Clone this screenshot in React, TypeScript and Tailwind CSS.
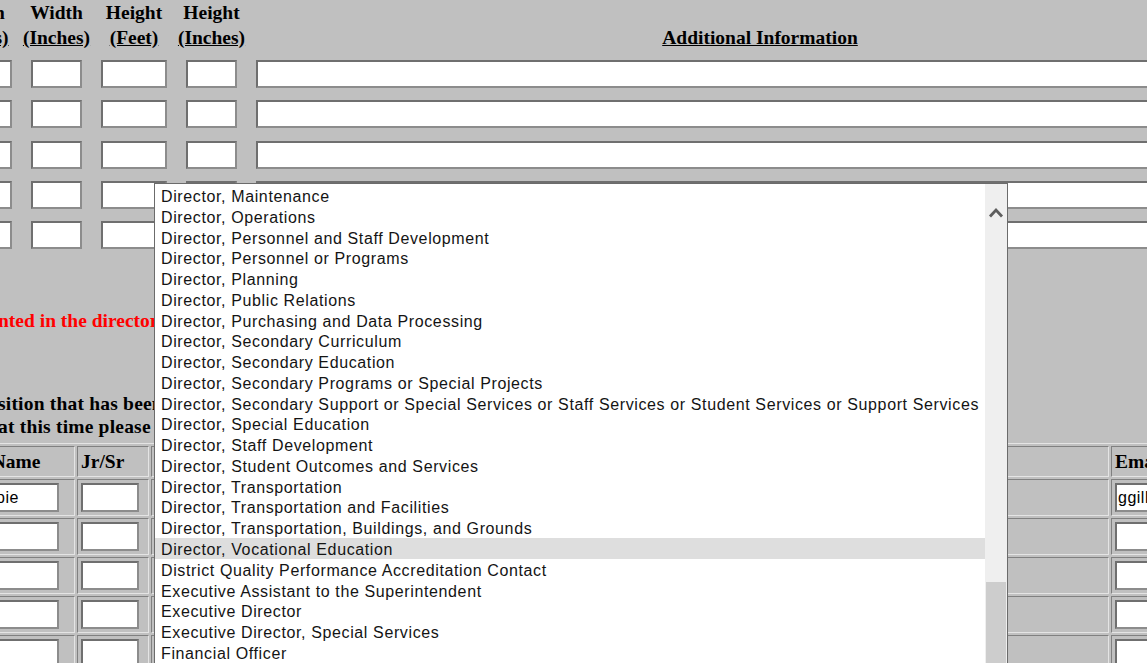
const titles = [
  "Director, Maintenance",
  "Director, Operations",
  "Director, Personnel and Staff Development",
  "Director, Personnel or Programs",
  "Director, Planning",
  "Director, Public Relations",
  "Director, Purchasing and Data Processing",
  "Director, Secondary Curriculum",
  "Director, Secondary Education",
  "Director, Secondary Programs or Special Projects",
  "Director, Secondary Support or Special Services or Staff Services or Student Services or Support Services",
  "Director, Special Education",
  "Director, Staff Development",
  "Director, Student Outcomes and Services",
  "Director, Transportation",
  "Director, Transportation and Facilities",
  "Director, Transportation, Buildings, and Grounds",
  "Director, Vocational Education",
  "District Quality Performance Accreditation Contact",
  "Executive Assistant to the Superintendent",
  "Executive Director",
  "Executive Director, Special Services",
  "Financial Officer",
  "Food Service Director",
];

const SELECTED = 17;

const inputCls =
  "box-border block border-2 border-t-[#6f6f6f] border-l-[#6f6f6f] border-r-[#8c8c8c] border-b-[#8c8c8c] bg-white px-[1px] font-['Liberation_Sans',Arial,sans-serif] text-[16px] tracking-[0.5px] text-black outline-none";

const cellCls =
  "border border-t-[#808080] border-l-[#808080] border-r-[#e4e4e4] border-b-[#e4e4e4] p-[3px] text-left align-middle";

const sizeCols = [
  { top: "Length", bottom: "(Inches)", w: "w-[74px]" },
  { top: "Width", bottom: "(Inches)", w: "w-[51px]" },
  { top: "Height", bottom: "(Feet)", w: "w-[66px]" },
  { top: "Height", bottom: "(Inches)", w: "w-[51px]" },
  { top: "\u00a0", bottom: "Additional Information", w: "w-[1008px]" },
];

function SizeColumn({ top, bottom, w }: { top: string; bottom: string; w: string }) {
  return (
    <div className={`flex shrink-0 flex-col items-center ${w}`}>
      <div className="h-[50px] whitespace-nowrap text-center text-[19.5px] font-bold leading-[25px]">
        <div>{top}</div>
        <div className="underline">{bottom}</div>
      </div>
      <div className="mt-[10px] flex w-full flex-col gap-[12.25px]">
        {[0, 1, 2, 3, 4].map((i) => (
          <input key={i} className={`${inputCls} h-[28px] w-full`} defaultValue="" />
        ))}
      </div>
    </div>
  );
}

function TitleList() {
  return (
    <div className="absolute left-[154px] top-[183px] flex h-[500px] w-[854px] border border-[#6b6b6b] bg-white">
      <div className="min-w-0 flex-1 overflow-hidden pt-[1px] font-['Liberation_Sans',Arial,sans-serif] text-[16px] tracking-[0.62px] text-[#141414]">
        {titles.map((t, i) => (
          <div
            key={t}
            className={
              i === SELECTED
                ? "h-[20.77px] whitespace-nowrap bg-[#dedede] pl-[6px] pt-[2px] leading-[20.77px]"
                : "h-[20.77px] whitespace-nowrap pl-[6px] pt-[2px] leading-[20.77px]"
            }
          >
            {t}
          </div>
        ))}
      </div>
      {/* scrollbar */}
      <div className="relative w-[22px] shrink-0 bg-[#efefef]">
        <svg className="absolute left-0 top-[20px]" width="22" height="16" viewBox="0 0 22 16">
          <polyline points="5,12.5 11,6 17,12.5" fill="none" stroke="#5e5e5e" strokeWidth="2.8" />
        </svg>
        <div className="absolute bottom-0 left-[1px] right-[1px] top-[398px] bg-[#cdcdcd]" />
      </div>
    </div>
  );
}

export default function App() {
  return (
    <div className="relative h-[663px] w-[1147px] overflow-hidden bg-[#c0c0c0] font-['Liberation_Serif','Times_New_Roman',serif] text-black">
      {/* sign size table */}
      <div className="ml-[-62px] flex gap-[19px]">
        {sizeCols.map((c, i) => (
          <SizeColumn key={i} top={c.top} bottom={c.bottom} w={c.w} />
        ))}
      </div>

      <div className="ml-[-2px] mt-[60px] whitespace-nowrap text-[19.5px] font-bold leading-[23px] text-[#ff0000]">
        nted in the directory.
      </div>

      <div className="ml-[-2px] mt-[60px] whitespace-nowrap text-[19.5px] font-bold leading-[23px] tracking-[0.2px]">
        <div>sition that has been vacated,</div>
        <div>at this time please leave blank.</div>
      </div>

      {/* staff table */}
      <table className="ml-[-57px] mt-[5px] w-[1371px] table-fixed border-separate border-spacing-[2px] border border-t-[#e4e4e4] border-l-[#e4e4e4] border-r-[#808080] border-b-[#808080]">
        <thead>
          <tr className="text-[19.5px] font-bold leading-[23px]">
            <th className={`${cellCls} w-[129px]`}>Last Name</th>
            <th className={`${cellCls} w-[72px]`}>Jr/Sr</th>
            <th className={`${cellCls} w-[958px]`}></th>
            <th className={`${cellCls} w-[200px] whitespace-nowrap`}>Email</th>
          </tr>
        </thead>
        <tbody>
          {[0, 1, 2, 3, 4].map((r) => (
            <tr key={r}>
              <td className={cellCls}>
                <input className={`${inputCls} h-[29px] w-[109px]`} defaultValue={r === 0 ? "Gillespie" : ""} />
              </td>
              <td className={cellCls}>
                <input className={`${inputCls} h-[29px] w-[58px]`} defaultValue="" />
              </td>
              <td className={cellCls}>
                <div className="h-[29px]" />
              </td>
              <td className={cellCls}>
                <input className={`${inputCls} h-[29px] w-[190px]`} defaultValue={r === 0 ? "ggillespie@usd.org" : ""} />
              </td>
            </tr>
          ))}
        </tbody>
      </table>

      <TitleList />
    </div>
  );
}
